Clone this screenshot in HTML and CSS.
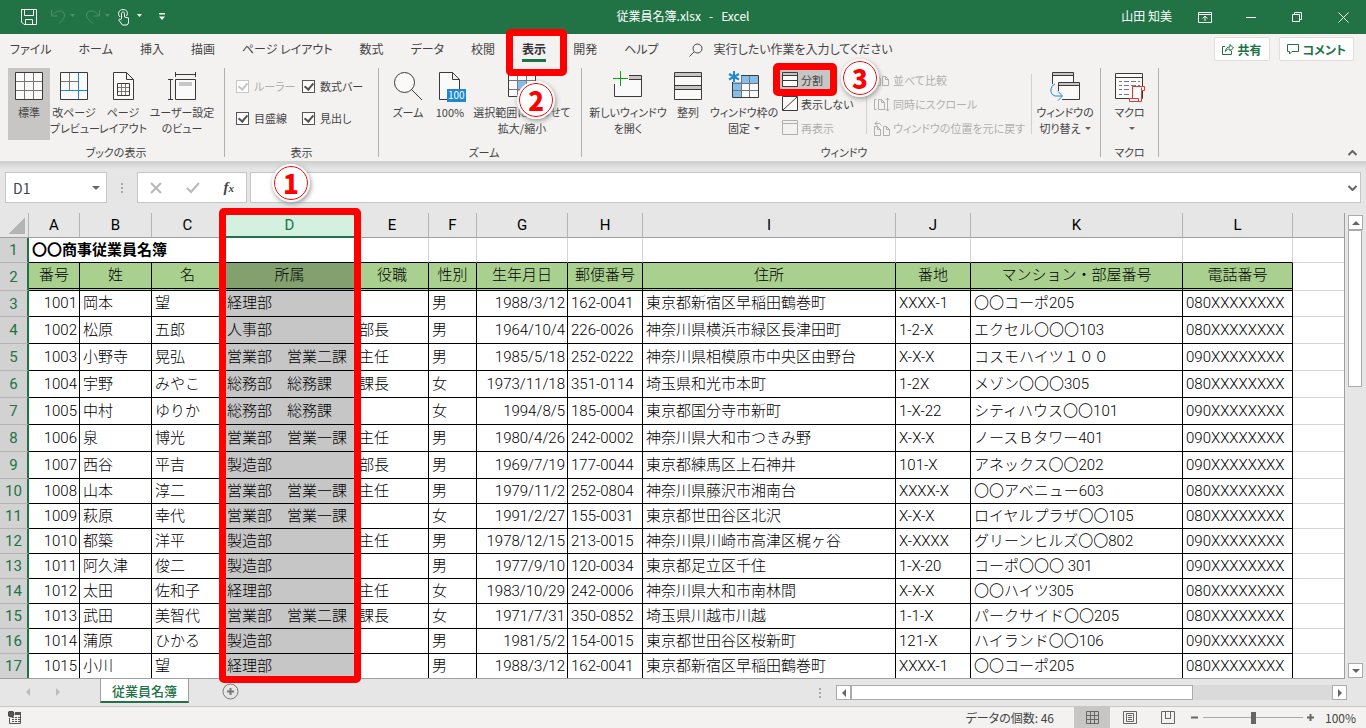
FILE: index.html
```html
<!DOCTYPE html>
<html lang="ja">
<head>
  <meta charset="UTF-8">
  <meta name="viewport" content="width=device-width, initial-scale=1.0">
  <title>従業員名簿.xlsx - Excel</title>
  <link rel="stylesheet" href="styles.css">
</head>
<body>
  <!-- タイトルバー -->
  <header class="titlebar">
    <div class="quick">
      <button type="button" aria-label="上書き保存"><svg width="18" height="18" viewBox="0 0 18 18"><path d="M1.500 1.500h15v15H4l-2.500-2.500zM4.500 1.500v6h9v-6M5.500 16.500v-5h7v5"/></svg></button>
      <button type="button" class="faded undo" aria-label="元に戻す"><svg width="26" height="18" viewBox="0 0 26 18"><path d="M1.500 2v6h6M2 7.500C6 2 14 1 14.500 7c0 4-3 6-6 9"/><path class="solid" d="M20 6h5l-2.500 3z"/></svg></button>
      <button type="button" class="faded redo" aria-label="やり直し"><svg width="26" height="18" viewBox="0 0 26 18"><path d="M14.500 2v6h-6M14 7.500C10 2 2 1 1.500 7c0 4 4 6 7 9"/><path class="solid" d="M20 6h5l-2.500 3z"/></svg></button>
      <button type="button" class="touch" aria-label="タッチ/マウス モード"><svg width="26" height="18" viewBox="0 0 26 18"><path d="M3 9C0 6 2 1.500 6 1.500S11.500 5 9.500 8"/><path d="M4.500 11V5.500c0-2 3-2 3 0V9l4 1v5l-1.500 2H5.500L2 12.500c-.5-1.500 1-2 2.500-.5"/><path class="solid" d="M20 6h5l-2.500 3z"/></svg></button>
      <button type="button" class="more" aria-label="カスタマイズ"><svg width="6" height="8" viewBox="0 0 6 8"><path class="solid" d="M0 0h6v1.500H0zM0 3.500h6L3 7z"/></svg></button>
    </div>
    <div class="doc-title">従業員名簿.xlsx&nbsp;&nbsp; -&nbsp;&nbsp; Excel</div>
    <div class="window-tools">
      <span class="user">山田 知美</span>
      <button type="button" aria-label="リボンの表示オプション"><svg width="14" height="11" viewBox="0 0 14 11"><path d="M.5.500h13v10H.5zM.5 2.500h13M7 9V4.500M4.500 6.500L7 4l2.500 2.500"/></svg></button>
      <button type="button" aria-label="最小化"><svg width="10" height="10" viewBox="0 0 10 10"><path d="M0 5.500h10"/></svg></button>
      <button type="button" aria-label="元のサイズ"><svg width="10" height="10" viewBox="0 0 10 10"><path d="M.5 2.500h7v7h-7zM2.500 2.500v-2h7v7h-2"/></svg></button>
      <button type="button" aria-label="閉じる"><svg width="11" height="11" viewBox="0 0 11 11"><path d="M.5.500l10 10M10.500.500l-10 10"/></svg></button>
    </div>
  </header>

  <!-- リボンのタブ -->
  <nav class="tabs">
    <button type="button"><span>ファイル</span></button>
    <button type="button"><span>ホーム</span></button>
    <button type="button"><span>挿入</span></button>
    <button type="button"><span>描画</span></button>
    <button type="button"><span>ページ レイアウト</span></button>
    <button type="button"><span>数式</span></button>
    <button type="button"><span>データ</span></button>
    <button type="button"><span>校閲</span></button>
    <button type="button" class="active"><span>表示</span><i class="mark-frame tab-frame"></i><b class="mark step-tab">2</b></button>
    <button type="button"><span>開発</span></button>
    <button type="button"><span>ヘルプ</span></button>
    <button type="button" class="tell-me"><svg width="14" height="14" viewBox="0 0 14 14"><circle cx="8.500" cy="5.500" r="4.500"/><path d="M5 9L.5 13.500"/></svg><span>実行したい作業を入力してください</span></button>
    <div class="share">
      <button type="button"><svg width="12" height="12" viewBox="0 0 12 12"><path d="M3 3.500H.5v8h9V8M3.500 8.500C3.500 5.500 5 4 8 4V1.500L11.500 5 8 8V6C6 6 4.500 6.500 3.500 8.500z"/></svg>共有</button>
      <button type="button"><svg width="12" height="11" viewBox="0 0 12 11"><path d="M.5.500h11v7H5L2.500 10V7.500h-2z"/></svg>コメント</button>
    </div>
  </nav>

  <!-- リボン -->
  <section class="ribbon">
    <div class="group g-book">
      <div class="tools">
        <button type="button" class="big pressed w42"><svg class="icon" width="30" height="30" viewBox="0 0 30 30"><path class="k w" d="M1.500 1.500h27v27h-27z"/><path class="g" d="M10.500 2v26M19.500 2v26M2 10.500h26M2 19.500h26"/></svg>標準</button>
        <button type="button" class="big w48"><svg class="icon" width="30" height="30" viewBox="0 0 30 30"><path class="k w" d="M1.500 1.500h27v27h-27z"/><path class="g" d="M10.500 2v17M2 10.500h17"/><path class="b" d="M19.500 2v26M2 19.500h26"/></svg>改ページ<br>プレビュー</button>
        <button type="button" class="big w50"><svg class="icon" width="30" height="30" viewBox="0 0 30 30"><path class="k w" d="M5.500 1.500h13l7 7v20h-20zM18.500 1.500v7h7"/><path class="k" d="M9.500 12.500h12v12h-12z"/><path class="g" d="M13.500 13v11M17.500 13v11M10 16.500h11M10 20.500h11"/></svg>ページ<br>レイアウト</button>
        <button type="button" class="big w68"><svg class="icon" width="30" height="30" viewBox="0 0 30 30"><path class="k w" d="M8.500 8.500h20v20h-20z"/><path class="k" d="M8.500 1v5M28.500 1v5M8.500 3.500h20M1 8.500h5M1 28.500h5M3.500 8.500v20"/><path fill="#c8c6c4" d="M12 11h13v4H12z"/></svg>ユーザー設定<br>のビュー</button>
      </div>
      <div class="caption">ブックの表示</div>
    </div>
    <div class="group g-show">
      <div class="tools checks">
        <label class="off"><input type="checkbox" checked disabled>ルーラー</label>
        <label><input type="checkbox" checked>数式バー</label>
        <label><input type="checkbox" checked>目盛線</label>
        <label><input type="checkbox" checked>見出し</label>
      </div>
      <div class="caption">表示</div>
    </div>
    <div class="group g-zoom">
      <div class="tools">
        <button type="button" class="big w42"><svg class="icon" width="30" height="30" viewBox="0 0 30 30"><circle class="k w" cx="11.500" cy="11.500" r="10"/><path class="k" d="M18.500 18.500L29 29"/></svg>ズーム</button>
        <button type="button" class="big w42"><svg class="icon" width="32" height="30" viewBox="0 0 32 30"><path class="k w" d="M5.500 1.500h13l7 7v20h-20zM18.500 1.500v7h7"/><path fill="#1e88d2" d="M13 18h19v13H13z"/><text x="14" y="28" font-size="10" fill="#fff">100</text></svg>100%</button>
        <button type="button" class="big w102"><svg class="icon" width="30" height="30" viewBox="0 0 30 30"><path class="k w" d="M1.500 1.500h27v24h-27z"/><path fill="#83beec" d="M10 10h10v10H10z"/><path class="g" d="M10.500 2v23M19.500 2v23M2 9.500h26M2 18.500h26"/></svg>選択範囲に合わせて<br>拡大/縮小</button>
      </div>
      <div class="caption">ズーム</div>
    </div>
    <div class="group g-window">
      <div class="tools">
        <button type="button" class="big w80"><svg class="icon" width="32" height="30" viewBox="0 0 32 30"><path class="k w" d="M17 4.500h12.500v21h-27V13"/><path fill="#c8c6c4" d="M17 5h12v3H17z"/><path class="k" d="M17 8.500h12.500"/><path stroke="#13a10e" fill="none" d="M8.500 0v15M1 7.500h15"/></svg>新しいウィンドウ<br>を開く</button>
        <button type="button" class="big w40"><svg class="icon" width="30" height="30" viewBox="0 0 30 30"><path class="k w" d="M1.500 1.500h27v27h-27z"/><path fill="#c8c6c4" d="M2 2h26v3H2zM2 15h26v3H2z"/><path class="k" d="M2 5.500h26M2 14.500h26M2 18.500h26"/></svg>整列</button>
        <button type="button" class="big w72"><svg class="icon" width="32" height="30" viewBox="0 0 32 30"><path class="k w" d="M4.500 4.500h26v22h-26z"/><path fill="#83beec" d="M5 5h25v7H5zM5 12h8v14H5z"/><path class="g" d="M13.500 5v21M21.500 5v21M5 12.500h25M5 19.500h25"/><path fill="#f3f2f1" d="M0 0h13v11H0z"/><path stroke="#1e88d2" stroke-width="2" d="M6 0v11M1 3l10 5.500M11 3L1 8.500"/></svg>ウィンドウ枠の<br>固定<i class="caret"></i></button>
        <div class="stack s-split">
          <button type="button" class="pressed"><svg width="16" height="15" viewBox="0 0 16 15"><path class="k w" d="M.5.500h15v14H.5z"/><path fill="#c8c6c4" d="M1 1h14v2H1z"/><path class="k" d="M1 3.500h14M1 8.500h14"/></svg>分割<i class="mark-frame"></i><b class="mark step-split">3</b></button>
          <button type="button"><svg width="16" height="15" viewBox="0 0 16 15"><path class="k w" d="M.5.500h15v14H.5zM1 14L15 1"/></svg>表示しない</button>
          <button type="button" class="off" disabled><svg width="16" height="15" viewBox="0 0 16 15"><path class="l" d="M.5.500h15v14H.5zM1 3.500h14"/></svg>再表示</button>
        </div>
        <div class="stack s-side">
          <button type="button" class="off" disabled><svg width="16" height="15" viewBox="0 0 16 15"><path class="l" d="M.5 3.500h4l2 2v7h-6zM8.500 3.500h3l3 3v6h-6zM11.500 3.500v3h3"/></svg>並べて比較</button>
          <button type="button" class="off" disabled><svg width="16" height="15" viewBox="0 0 16 15"><path class="l" d="M2.500 2.500h-2v10h2M4.500 2.500h3l3 3v7h-6zM7.500 2.500v3h3M13.500 1v13M11.500 3l2-2 2 2M11.500 12l2 2 2-2"/></svg>同時にスクロール</button>
          <button type="button" class="off" disabled><svg width="16" height="15" viewBox="0 0 16 15"><path class="l" d="M.5 5.500h3l3 3v6h-6zM3.500 5.500v3h3M9.500 5.500h3l3 3v6h-6zM12.500 5.500v3h3M3.500 0L1 2.500 3.500 5M1 2.500h4.500l2 2"/></svg>ウィンドウの位置を元に戻す</button>
        </div>
        <button type="button" class="big w66"><svg class="icon" width="32" height="30" viewBox="0 0 32 30"><path class="k w" d="M3.500 1.500h21v18h-21z"/><path fill="#c8c6c4" d="M4 2h20v2H4z"/><path class="k" d="M4 4.500h20"/><path fill="#f3f2f1" d="M0 13h14v17H0z"/><path class="k w" d="M9.500 11.500h21v17h-21z"/><path fill="#c8c6c4" d="M10 12h20v2H10z"/><path class="k" d="M10 14.500h20"/><path fill="#f3f2f1" d="M8 20h5v10H8z"/><path class="b" d="M6 13C1 15 0 23 6 25h7M9 20.500l4.500 4.500L9 29.500"/></svg>ウィンドウの<br>切り替え<i class="caret"></i></button>
      </div>
      <div class="caption">ウィンドウ</div>
    </div>
    <div class="group g-macro">
      <div class="tools">
        <button type="button" class="big w58"><svg class="icon" width="32" height="30" viewBox="0 0 32 30"><path class="k w" d="M1.500 2.500h27v25h-27z"/><path class="k" d="M2 6.500h26"/><path class="g" stroke-dasharray="5 2" d="M10 10.500h16M10 14.500h16M10 18.500h7M10 23.500h5"/><path class="g" d="M5 10.500h3M5 14.500h3M5 18.500h3M5 23.500h3"/><path fill="#fff" stroke="#e8352e" d="M18.500 15.500h12v4h-3v11h-12v-3h3zM27.500 19.500v-3M15.500 27.500h9v3"/></svg>マクロ<br><i class="caret"></i></button>
      </div>
      <div class="caption">マクロ</div>
    </div>
    <button type="button" class="collapse" aria-label="リボンを折りたたむ"><svg width="9" height="6" viewBox="0 0 9 6"><path d="M.5 5l4-4 4 4"/></svg></button>
  </section>

  <!-- 数式バー -->
  <section class="formula-bar">
    <div class="name-box"><input type="text" value="D1" aria-label="名前ボックス"><i class="caret"></i></div>
    <div class="dots"></div>
    <div class="fx-box">
      <button type="button" aria-label="キャンセル"><svg width="12" height="12" viewBox="0 0 12 12"><path d="M1 1l10 10M11 1L1 11"/></svg></button>
      <button type="button" aria-label="入力"><svg width="14" height="12" viewBox="0 0 14 12"><path d="M1 6l4 4 8-9"/></svg></button>
      <button type="button" class="fx" aria-label="関数の挿入"><em>f<small>x</small></em></button>
    </div>
    <div class="formula"><input type="text" aria-label="数式"><svg width="9" height="6" viewBox="0 0 9 6"><path d="M.5 1l4 4 4-4"/></svg><b class="mark step-column">1</b></div>
  </section>

  <!-- シート -->
  <main class="sheet">
    <div class="grid">
      <table>
        <colgroup><col class="c-no"><col class="c-a"><col class="c-b"><col class="c-c"><col class="c-d"><col class="c-e"><col class="c-f"><col class="c-g"><col class="c-h"><col class="c-i"><col class="c-j"><col class="c-k"><col class="c-l"><col></colgroup>
        <thead>
          <tr><th class="corner"></th><th>A</th><th>B</th><th>C</th><th class="selected">D</th><th>E</th><th>F</th><th>G</th><th>H</th><th>I</th><th>J</th><th>K</th><th>L</th><th class="rest"></th></tr>
        </thead>
        <tbody>
          <tr class="title-row"><th>1</th><td colspan="3" class="title">〇〇商事従業員名簿</td><td></td><td></td><td></td><td></td><td></td><td></td><td></td><td></td><td></td><td></td></tr>
          <tr class="head-row data"><th>2</th><td>番号</td><td>姓</td><td>名</td><td>所属</td><td>役職</td><td>性別</td><td>生年月日</td><td>郵便番号</td><td>住所</td><td>番地</td><td>マンション・部屋番号</td><td>電話番号</td><td></td></tr>
          <tr class="data first"><th>3</th><td>1001</td><td>岡本</td><td>望</td><td>経理部</td><td></td><td>男</td><td>1988/3/12</td><td>162-0041</td><td>東京都新宿区早稲田鶴巻町</td><td>XXXX-1</td><td>〇〇コーポ205</td><td>080XXXXXXXX</td><td></td></tr>
          <tr class="data tall"><th>4</th><td>1002</td><td>松原</td><td>五郎</td><td>人事部</td><td>部長</td><td>男</td><td>1964/10/4</td><td>226-0026</td><td>神奈川県横浜市緑区長津田町</td><td>1-2-X</td><td>エクセル〇〇〇103</td><td>080XXXXXXXX</td><td></td></tr>
          <tr class="data tall"><th>5</th><td>1003</td><td>小野寺</td><td>晃弘</td><td>営業部　営業二課</td><td>主任</td><td>男</td><td>1985/5/18</td><td>252-0222</td><td>神奈川県相模原市中央区由野台</td><td>X-X-X</td><td>コスモハイツ１００</td><td>090XXXXXXXX</td><td></td></tr>
          <tr class="data tall"><th>6</th><td>1004</td><td>宇野</td><td>みやこ</td><td>総務部　総務課</td><td>課長</td><td>女</td><td>1973/11/18</td><td>351-0114</td><td>埼玉県和光市本町</td><td>1-2X</td><td>メゾン〇〇〇305</td><td>080XXXXXXXX</td><td></td></tr>
          <tr class="data tall"><th>7</th><td>1005</td><td>中村</td><td>ゆりか</td><td>総務部　総務課</td><td></td><td>女</td><td>1994/8/5</td><td>185-0004</td><td>東京都国分寺市新町</td><td>1-X-22</td><td>シティハウス〇〇101</td><td>090XXXXXXXX</td><td></td></tr>
          <tr class="data tall"><th>8</th><td>1006</td><td>泉</td><td>博光</td><td>営業部　営業一課</td><td>主任</td><td>男</td><td>1980/4/26</td><td>242-0002</td><td>神奈川県大和市つきみ野</td><td>X-X-X</td><td>ノースＢタワー401</td><td>090XXXXXXXX</td><td></td></tr>
          <tr class="data tall"><th>9</th><td>1007</td><td>西谷</td><td>平吉</td><td>製造部</td><td>部長</td><td>男</td><td>1969/7/19</td><td>177-0044</td><td>東京都練馬区上石神井</td><td>101-X</td><td>アネックス〇〇202</td><td>090XXXXXXXX</td><td></td></tr>
          <tr class="data"><th>10</th><td>1008</td><td>山本</td><td>淳二</td><td>営業部　営業一課</td><td>主任</td><td>男</td><td>1979/11/2</td><td>252-0804</td><td>神奈川県藤沢市湘南台</td><td>XXXX-X</td><td>〇〇アベニュー603</td><td>080XXXXXXXX</td><td></td></tr>
          <tr class="data"><th>11</th><td>1009</td><td>萩原</td><td>幸代</td><td>営業部　営業一課</td><td></td><td>女</td><td>1991/2/27</td><td>155-0031</td><td>東京都世田谷区北沢</td><td>X-X-X</td><td>ロイヤルプラザ〇〇105</td><td>080XXXXXXXX</td><td></td></tr>
          <tr class="data"><th>12</th><td>1010</td><td>都築</td><td>洋平</td><td>製造部</td><td>主任</td><td>男</td><td>1978/12/15</td><td>213-0015</td><td>神奈川県川崎市高津区梶ヶ谷</td><td>X-XXXX</td><td>グリーンヒルズ〇〇802</td><td>090XXXXXXXX</td><td></td></tr>
          <tr class="data"><th>13</th><td>1011</td><td>阿久津</td><td>俊二</td><td>製造部</td><td></td><td>男</td><td>1977/9/10</td><td>120-0034</td><td>東京都足立区千住</td><td>1-X-20</td><td>コーポ〇〇〇 301</td><td>090XXXXXXXX</td><td></td></tr>
          <tr class="data"><th>14</th><td>1012</td><td>太田</td><td>佐和子</td><td>経理部</td><td>主任</td><td>女</td><td>1983/10/29</td><td>242-0006</td><td>神奈川県大和市南林間</td><td>X-X-X</td><td>〇〇ハイツ305</td><td>080XXXXXXXX</td><td></td></tr>
          <tr class="data"><th>15</th><td>1013</td><td>武田</td><td>美智代</td><td>営業部　営業二課</td><td>課長</td><td>女</td><td>1971/7/31</td><td>350-0852</td><td>埼玉県川越市川越</td><td>1-1-X</td><td>パークサイド〇〇205</td><td>080XXXXXXXX</td><td></td></tr>
          <tr class="data"><th>16</th><td>1014</td><td>蒲原</td><td>ひかる</td><td>製造部</td><td></td><td>男</td><td>1981/5/2</td><td>154-0015</td><td>東京都世田谷区桜新町</td><td>121-X</td><td>ハイランド〇〇106</td><td>090XXXXXXXX</td><td></td></tr>
          <tr class="data"><th>17</th><td>1015</td><td>小川</td><td>望</td><td>経理部</td><td></td><td>男</td><td>1988/3/12</td><td>162-0041</td><td>東京都新宿区早稲田鶴巻町</td><td>XXXX-1</td><td>〇〇コーポ205</td><td>080XXXXXXXX</td><td></td></tr>
        </tbody>
      </table>
    </div>
    <div class="vscroll">
      <button type="button" aria-label="上へ"><i class="arrow up"></i></button>
      <div class="thumb"></div>
      <button type="button" class="last" aria-label="下へ"><i class="arrow down"></i></button>
    </div>
    <i class="mark-frame column-frame"></i>
  </main>

  <!-- シート見出し -->
  <section class="sheet-tabs">
    <button type="button" class="nav" aria-label="前のシート"><i class="arrow left"></i></button>
    <button type="button" class="nav" aria-label="次のシート"><i class="arrow right"></i></button>
    <button type="button" class="sheet-tab">従業員名簿</button>
    <button type="button" class="add" aria-label="新しいシート"><svg width="17" height="17" viewBox="0 0 17 17"><circle cx="8.500" cy="8.500" r="7.500"/><path stroke-width="2" d="M8.500 5v7M5 8.500h7"/></svg></button>
    <div class="dots"></div>
    <div class="hscroll">
      <button type="button" aria-label="左へ"><i class="arrow left"></i></button>
      <div class="thumb"></div>
      <button type="button" class="last" aria-label="右へ"><i class="arrow right"></i></button>
    </div>
  </section>

  <!-- ステータスバー -->
  <footer class="status">
    <svg width="14" height="13" viewBox="0 0 14 13"><circle cx="3" cy="3" r="3" fill="#555"/><path fill="#555" d="M7 1h6v3H7z"/><path stroke="#555" fill="none" d="M1.500 7v5.500h11V4M4 6.500h2M7 6.500h2M10 6.500h2M4 8.500h2M7 8.500h2M10 8.500h2M4 10.500h2M7 10.500h2M10 10.500h2"/></svg>
    <span class="count">データの個数: 46</span>
    <button type="button" class="view pressed" aria-label="標準"><svg width="13" height="13" viewBox="0 0 13 13"><path d="M.5.500h12v12H.5zM4.500 0v13M8.500 0v13M0 4.500h13M0 8.500h13"/></svg></button>
    <button type="button" class="view" aria-label="ページ レイアウト"><svg width="14" height="13" viewBox="0 0 14 13"><path d="M.5.500h13v12H.5zM3.500 2.500h7v8h-7zM5 4.500h4M5 6.500h4M5 8.500h4"/></svg></button>
    <button type="button" class="view" aria-label="改ページ プレビュー"><svg width="14" height="13" viewBox="0 0 14 13"><path d="M.5.500h13v12H.5zM4.500 0v7M9.500 0v7M4 7.500h6"/></svg></button>
    <button type="button" class="zoom-step" aria-label="縮小"><svg width="7" height="7" viewBox="0 0 7 7"><path stroke-width="2" d="M0 3.500h7"/></svg></button>
    <input type="range" min="0" max="100" value="50" aria-label="ズーム">
    <button type="button" class="zoom-step" aria-label="拡大"><svg width="7" height="7" viewBox="0 0 7 7"><path stroke-width="2" d="M0 3.500h7M3.500 0v7"/></svg></button>
    <span class="percent">100%</span>
  </footer>
</body>
</html>
```

FILE: styles.css
```css
* {
  box-sizing: border-box;
}
body {
  margin: 0;
  height: 100vh;
  display: flex;
  flex-direction: column;
  overflow: hidden;
  background-color: #e6e6e6;
  color: #444;
  font-family: "Noto Sans CJK JP", sans-serif;
  font-size: 12px;
  font-feature-settings: "palt";
  white-space: nowrap;
}
button {
  margin: 0;
  padding: 0;
  border: none;
  background: none;
  color: inherit;
  font: inherit;
  font-feature-settings: inherit;
  white-space: nowrap;
}
input {
  margin: 0;
  font: inherit;
  color: inherit;
}
svg {
  display: block;
  flex: none;
  fill: none;
  stroke: currentColor;
}
svg text {
  stroke: none;
}
svg path[fill] {
  stroke-width: 0;
}
svg path[stroke] {
  stroke-width: 1;
}
svg path[stroke-width] {
  stroke-width: 2;
}

/* タイトルバー */
.titlebar {
  height: 34px;
  flex: none;
  display: grid;
  grid-template-columns: 1fr auto 1fr;
  align-items: center;
  background-color: #217346;
  color: #fff;
}
.doc-title {
  padding-bottom: 4px;
}
.quick {
  display: flex;
  align-items: center;
  padding-left: 20px;
}
.quick .undo {
  margin-left: 12px;
}
.quick .redo {
  margin-left: 9px;
}
.quick .touch {
  margin-left: 6px;
}
.quick .more {
  margin-left: 16px;
}
.quick .solid {
  fill: currentColor;
  stroke: none;
}
.faded {
  color: #4d9069;
}
.window-tools {
  display: flex;
  justify-content: flex-end;
  align-items: center;
}
.window-tools button {
  width: 46px;
  height: 34px;
  display: flex;
  align-items: center;
  justify-content: center;
}
.user {
  margin-right: 10px;
  padding-bottom: 4px;
}

/* タブ */
.tabs {
  height: 32px;
  flex: none;
  display: flex;
  gap: 1px;
  background-color: #f3f2f1;
}
.tabs > button {
  position: relative;
  padding: 5px 13px 0;
  display: flex;
  align-items: flex-start;
}
.tabs > button:first-child {
  padding-left: 10px;
}
.tabs span {
  line-height: 20px;
}
.tabs .active {
  font-weight: bold;
}
.tabs .active span {
  color: #333;
  border-bottom: 3px solid #217346;
}
.tabs .tell-me {
  padding-left: 16px;
  gap: 11px;
}
.tell-me svg {
  margin-top: 4px;
}
.share {
  margin-left: auto;
  padding: 3px 12px 0 0;
  display: flex;
  gap: 9px;
}
.share button {
  height: 24px;
  padding: 0 7px;
  display: flex;
  align-items: center;
  gap: 4px;
  background-color: #fff;
  border: 1px solid #e1dfdd;
  border-radius: 2px;
  color: #217346;
  font-weight: bold;
}

/* リボン */
.ribbon {
  height: 96px;
  flex: none;
  display: flex;
  background-color: #f3f2f1;
  border-bottom: 1px solid #d2d0ce;
  font-size: 11px;
}
.group {
  display: flex;
  flex-direction: column;
  margin: 2px 0 4px;
  border-right: 1px solid #b3b0ad;
}
.g-book {
  width: 225px;
  padding-left: 8px;
}
.g-show {
  width: 154px;
}
.g-zoom {
  width: 203px;
  padding-left: 8px;
}
.g-window {
  width: 519px;
  padding-left: 6px;
}
.g-macro {
  width: 58px;
}
.tools {
  flex: 1;
  min-height: 0;
  display: flex;
  align-items: flex-start;
}
.caption {
  line-height: 10px;
  text-align: center;
}
.big {
  display: block;
  line-height: 16px;
  text-align: center;
}
.big .icon {
  height: 30px;
  margin: 3px auto;
  overflow: visible;
}
.pressed {
  background-color: #c8c6c4;
}
.big.pressed {
  padding-bottom: 20px;
}
.w40 { width: 40px; }
.w42 { width: 42px; }
.w48 { width: 48px; }
.w50 { width: 50px; }
.w58 { width: 58px; }
.w66 { width: 66px; }
.w68 { width: 68px; }
.w72 { width: 72px; }
.w80 { width: 80px; }
.w102 { width: 102px; }
.icon .k,
.stack .k {
  stroke: #3b3a39;
}
svg .w {
  fill: #fafafa;
}
svg .g {
  stroke: #797774;
}
svg .b {
  stroke: #1e88d2;
}
svg .l {
  stroke: #b1afad;
}
.caret {
  display: inline-block;
  margin-left: 4px;
  vertical-align: 3px;
  border: 3px solid transparent;
  border-top-color: #666;
  border-bottom: none;
}
.checks {
  display: grid;
  grid-template-columns: 66px 80px;
  grid-auto-rows: 32px;
  padding: 2px 0 0 11px;
}
.checks label {
  height: 32px;
  display: flex;
  align-items: center;
  gap: 5px;
}
.off {
  color: #b1afad;
}
.checks input {
  appearance: none;
  width: 13px;
  height: 13px;
  border: 1px solid #555;
  background-color: #fff;
}
.checks input::after {
  content: "";
  display: block;
  width: 4px;
  height: 7px;
  margin: 0 auto;
  border: solid #555;
  border-width: 0 2px 2px 0;
  transform: rotate(40deg);
}
.checks .off input,
.checks .off input::after {
  border-color: #c8c6c4;
}
.stack {
  display: flex;
  flex-direction: column;
  align-items: flex-start;
}
.stack button {
  position: relative;
  height: 19px;
  padding: 0 4px 0 2px;
  display: flex;
  align-items: center;
  gap: 3px;
}
.s-split {
  width: 86px;
  gap: 5px;
  padding-top: 2px;
}
.s-split button {
  padding-right: 7px;
}
.s-side {
  width: 166px;
  gap: 12px;
  margin-top: 6px;
  padding-left: 5px;
  border-left: 1px solid #d2d0ce;
  border-right: 1px solid #d2d0ce;
}
.s-side button {
  height: 12px;
}
.collapse {
  margin: auto 9px 5px auto;
}

/* 操作手順の印 */
.mark-frame {
  position: absolute;
  inset: -7px;
  z-index: 2;
  border: 7px solid #f00;
  border-radius: 5px;
}
.tab-frame {
  inset: -5px -8px -10px -3px;
}
.column-frame {
  inset: -5px auto -4px 219px;
  width: 142px;
}
.mark {
  position: absolute;
  z-index: 3;
  width: 34px;
  height: 34px;
  border: 1px solid #f00;
  border-radius: 50%;
  outline: 2px solid #fff;
  background-color: #fff;
  box-shadow: 1px 2px 5px 2px #999;
  color: #f00;
  font-size: 26px;
  line-height: 31px;
  font-weight: 900;
  text-align: center;
}
.step-tab {
  left: 10px;
  top: 49px;
}
.step-split {
  left: 63px;
  top: -9px;
}
.step-column {
  left: 23px;
  top: -7px;
}

/* 数式バー */
.formula-bar {
  height: 51px;
  flex: none;
  display: flex;
  padding: 10px 5px 10px;
  background: linear-gradient(#d0d0d0, #e6e6e6 7px);
}
.name-box,
.fx-box,
.formula {
  display: flex;
  align-items: center;
  background-color: #fff;
  border: 1px solid #c6c6c6;
}
.name-box {
  width: 102px;
  padding: 0 6px 0 7px;
}
.name-box input,
.formula input {
  flex: 1;
  min-width: 0;
  padding: 0;
  border: none;
  background: none;
  font-size: 14px;
}
.name-box .caret {
  border-width: 4px 4px 0;
}
.dots {
  width: 2px;
  height: 10px;
  align-self: center;
  background: repeating-linear-gradient(#aaa 0 2px, transparent 2px 4px);
}
.formula-bar .dots {
  margin: 0 14px 0 14px;
}
.fx-box {
  width: 110px;
  justify-content: space-between;
  padding: 0 12px;
}
.fx-box button {
  color: #b8b8b8;
}
.fx-box svg path {
  stroke-width: 2;
}
.fx-box .fx {
  color: #444;
  font-family: "Liberation Serif", serif;
  font-size: 15px;
  font-weight: bold;
}
.fx small {
  font-size: 11px;
}
.formula {
  position: relative;
  flex: 1;
  margin-left: 3px;
  padding: 0 3px 0 8px;
}
.formula > svg path,
.collapse path {
  stroke: #666;
  stroke-width: 2;
}

/* シート */
.sheet {
  position: relative;
  flex: 1;
  min-height: 0;
  display: flex;
}
.grid {
  flex: 1;
  min-width: 0;
  overflow: hidden;
  border-right: 1px solid #9f9f9f;
  border-bottom: 1px solid #9f9f9f;
}
table {
  width: 100%;
  table-layout: fixed;
  border-collapse: separate;
  border-spacing: 0;
  color: #000;
  font-family: Roboto, "Noto Sans CJK JP", sans-serif;
  font-size: 15px;
  font-weight: 300;
  font-feature-settings: normal;
  line-height: 18px;
}
.c-no { width: 29px; }
.c-a { width: 51px; }
.c-b, .c-c { width: 72px; }
.c-d { width: 132px; }
.c-e { width: 73px; }
.c-f { width: 48px; }
.c-g { width: 91px; }
.c-h, .c-j { width: 75px; }
.c-i { width: 253px; }
.c-k { width: 212px; }
.c-l { width: 110px; }
th {
  padding: 0;
  font-weight: normal;
  text-align: center;
}
thead th {
  height: 25px;
  background-color: #e6e6e6;
  border-right: 1px solid #b4b4b4;
  border-bottom: 1px solid #9f9f9f;
}
thead .selected {
  background-color: #d3f0e0;
  border-bottom: 2px solid #217346;
  color: #217346;
}
thead .rest {
  border-right: none;
}
.corner {
  background: linear-gradient(135deg, transparent 50%, #b4b4b4 50%) 8px 4px / 17px 17px no-repeat, #e6e6e6;
}
tbody th {
  background-color: #d2d2d2;
  border-right: 2px solid #217346;
  border-bottom: 1px solid #b4b4b4;
  color: #217346;
}
td {
  height: 25px;
  padding: 0 2px 1px 3px;
  overflow: hidden;
  background-color: #fff;
  border-right: 1px solid #d4d4d4;
  border-bottom: 1px solid #d4d4d4;
}
td:last-child {
  border-right: none;
}
.title {
  font-weight: bold;
}
.title-row td {
  border-bottom-color: #000;
}
.title-row td:last-child {
  border-bottom-color: #d4d4d4;
}
.data td:not(:last-child) {
  border-color: #000;
}
.data td:nth-child(2),
.data td:nth-child(8) {
  padding-left: 0;
  text-align: right;
}
.data td:nth-child(5) {
  background-color: #c6c6c6;
}
.head-row.data td {
  height: 28px;
  padding-left: 2px;
  text-align: center;
}
.head-row td:not(:last-child) {
  background-color: #a9d08e;
  border-bottom: 3px double #000;
}
.head-row.data td:nth-child(5) {
  background-color: #83a06f;
}
.first td {
  height: 26px;
}
.tall td {
  height: 27px;
}

/* スクロールバー */
.vscroll {
  width: 21px;
  padding: 2px 4px 1px 3px;
  display: flex;
  flex-direction: column;
}
.vscroll button,
.hscroll button {
  width: 15px;
  height: 15px;
  flex: none;
  display: flex;
  align-items: center;
  justify-content: center;
  background-color: #fff;
  border: 1px solid #ababab;
}
.thumb {
  background-color: #fff;
  border: 1px solid #ababab;
}
.vscroll .thumb {
  height: 34%;
}
.vscroll .last {
  margin-top: auto;
}
.arrow {
  border: 4px solid transparent;
}
.up {
  border-bottom-color: #666;
  border-top: none;
}
.down {
  border-top-color: #666;
  border-bottom: none;
}
.left {
  border-right-color: #666;
  border-left: none;
}
.right {
  border-left-color: #666;
  border-right: none;
}

/* シート見出し */
.sheet-tabs {
  height: 28px;
  flex: none;
  display: flex;
  align-items: flex-start;
  border-bottom: 1px solid #c6c6c6;
}
.nav {
  width: 30px;
  height: 25px;
  display: flex;
  align-items: center;
  justify-content: flex-end;
}
.nav .left {
  border-right-color: #bbb;
}
.nav .right {
  border-left-color: #bbb;
}
.sheet-tab {
  height: 24px;
  min-width: 89px;
  margin-left: 40px;
  background-color: #fff;
  border: solid #9f9f9f;
  border-width: 0 1px;
  border-bottom: 2px solid #217346;
  color: #217346;
  font-size: 13px;
  font-weight: 500;
}
.add {
  margin: 4px 0 0 33px;
  color: #777;
}
.sheet-tabs .dots {
  margin: 0 15px 0 auto;
}
.hscroll {
  width: 511px;
  margin: 6px 19px 0 0;
  display: flex;
  background-color: #dadada;
}
.hscroll .thumb {
  width: 67%;
}
.hscroll .last {
  margin-left: auto;
}

/* ステータスバー */
.status {
  height: 21px;
  flex: none;
  display: flex;
  align-items: center;
  padding: 0 8px;
  background-color: #f3f2f1;
}
.count {
  margin: 0 20px 0 auto;
}
.view {
  width: 36px;
  height: 21px;
  margin-right: 2px;
  display: flex;
  align-items: center;
  justify-content: center;
  color: #666;
}
.zoom-step {
  margin-left: 3px;
  color: #666;
}
.status input {
  appearance: none;
  width: 100px;
  height: 14px;
  margin: 0 1px 0 5px;
  background: linear-gradient(#aaa, #aaa) center / 100% 1px no-repeat;
}
.status input::-webkit-slider-thumb {
  appearance: none;
  width: 5px;
  height: 12px;
  background-color: #666;
}
.percent {
  width: 33px;
  margin-left: 11px;
}
```
